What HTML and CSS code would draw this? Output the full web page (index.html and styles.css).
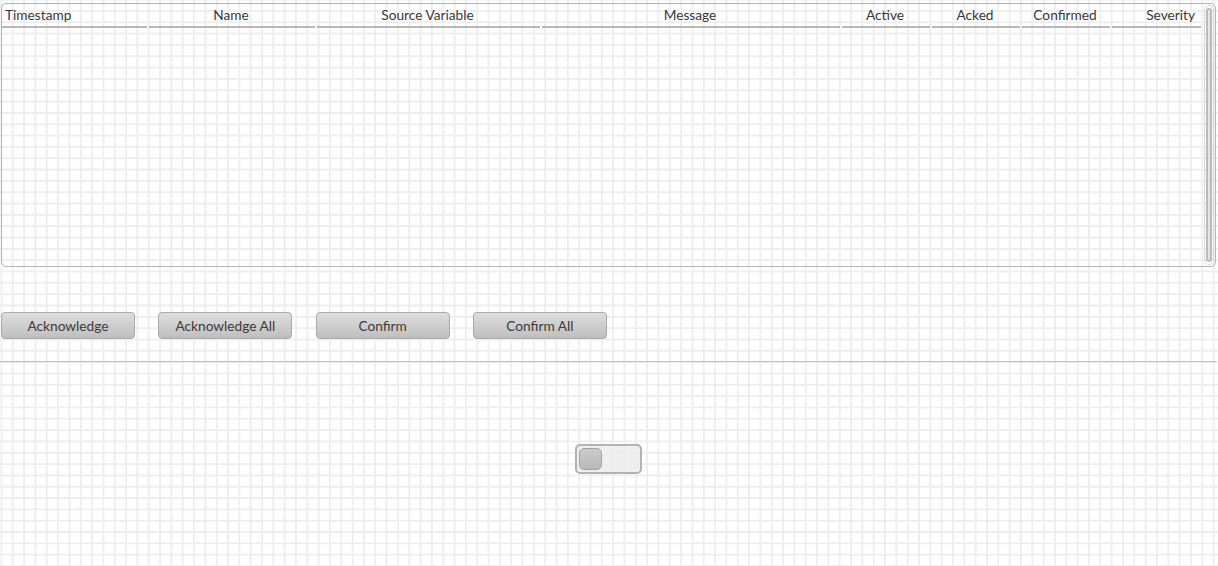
FILE: index.html
```html
<!doctype html>
<html lang="en">
<head>
    <meta charset="UTF-8">
    <meta name="viewport" content="width=device-width, initial-scale=1.0">
    <title>Alarms</title>
    <link rel="stylesheet" href="styles.css">
</head>
<body>
    <div class="screen">
        <!-- alarm table -->
        <div class="alarm-table">
            <div class="alarm-table-main">
                <div class="alarm-table-header">
                    <div class="alarm-table-col alarm-table-col-left">Timestamp</div>
                    <div class="alarm-table-col">Name</div>
                    <div class="alarm-table-col">Source Variable</div>
                    <div class="alarm-table-col">Message</div>
                    <div class="alarm-table-col">Active</div>
                    <div class="alarm-table-col">Acked</div>
                    <div class="alarm-table-col">Confirmed</div>
                    <div class="alarm-table-col alarm-table-col-right">Severity</div>
                </div>
                <div class="alarm-table-body"></div>
            </div>
            <div class="alarm-table-scroll">
                <div class="alarm-table-scroll-thumb"></div>
            </div>
        </div>

        <!-- actions -->
        <div class="alarm-actions">
            <button class="alarm-btn">Acknowledge</button>
            <button class="alarm-btn">Acknowledge All</button>
            <button class="alarm-btn">Confirm</button>
            <button class="alarm-btn">Confirm All</button>
        </div>

        <div class="divider"></div>

        <div class="toggle-row">
            <div class="toggle">
                <div class="toggle-knob"></div>
            </div>
        </div>
    </div>
</body>
</html>
```

FILE: styles.css
```css
html, body {
    margin: 0;
    padding: 0;
    background-color: #fff;
}

body {
    width: 1218px;
    height: 566px;
    overflow: hidden;
    font-family: Lato, "Liberation Sans", sans-serif;
    font-size: 13.7px;
    color: #383838;
    /* 网格背景 */
    background-image:
        linear-gradient(to right, #eeeeee 1.5px, transparent 1.5px),
        linear-gradient(to bottom, #eeeeee 1.5px, transparent 1.5px);
    background-size: 11.33px 11.33px;
    background-position: 0.5px 10px;
}

.screen {
    padding: 3px 2px 0 1px;
}

.alarm-table {
    display: flex;
    height: 262px;
    border: 1px solid #b4b4b4;
    border-radius: 5px;
}

.alarm-table-main {
    display: flex;
    flex-direction: column;
    width: 1199px;
}

.alarm-table-header {
    display: grid;
    grid-template-columns: 146px 168px 225px 300px 90px 90px 90px 90px;
    height: 24px;
}

.alarm-table-col {
    margin: 0 1px;
    padding-right: 2px;
    line-height: 22px;
    text-align: center;
    border-bottom: 2px solid #b8b8b8;
    white-space: nowrap;
}

.alarm-table-col-left {
    margin-left: 0;
    padding-left: 3px;
    text-align: left;
}

.alarm-table-col-right {
    margin-right: 0;
    padding-right: 6px;
    text-align: right;
}

.alarm-table-body {
    flex: 1;
}

.alarm-table-scroll {
    flex: 1;
    padding: 1px 2px 1px 2px;
}

.alarm-table-scroll-thumb {
    box-sizing: border-box;
    height: 100%;
    width: 10px;
    margin-left: 1px;
    border: 1px solid #d6d6d6;
    border-radius: 5px;
    padding: 2px 1px;
}

.alarm-table-scroll-thumb::after {
    content: "";
    display: block;
    box-sizing: border-box;
    height: 100%;
    border: 2px solid #bababa;
    border-radius: 4px;
    background-color: #e4e4e4;
}

.alarm-actions {
    display: flex;
    gap: 23.3px;
    margin-top: 45px;
}

.alarm-btn {
    box-sizing: border-box;
    width: 134px;
    height: 27px;
    padding: 0;
    font-family: inherit;
    font-size: 13.7px;
    color: #3a3a3a;
    border: 1px solid #a9a9a9;
    border-radius: 4px;
    background: linear-gradient(to bottom, #dddddd, #bfbfbf);
}

.divider {
    width: 1216px;
    margin-top: 22px;
    margin-left: -1px;
    border-top: 1px solid #bcbcbc;
}

.toggle-row {
    display: flex;
    justify-content: center;
    padding-top: 82px;
    margin-left: -1px;
    width: 1216px;
}

.toggle {
    box-sizing: border-box;
    width: 67px;
    height: 30px;
    padding: 2px;
    border: 2px solid #b2b2b2;
    border-radius: 5px;
    background-color: rgba(236, 236, 236, 0.85);
}

.toggle-knob {
    box-sizing: border-box;
    width: 23px;
    height: 22px;
    border: 1px solid #a4a4a4;
    border-radius: 5px;
    background: linear-gradient(to bottom, #cbcbcb, #b9b9b9);
}
```
